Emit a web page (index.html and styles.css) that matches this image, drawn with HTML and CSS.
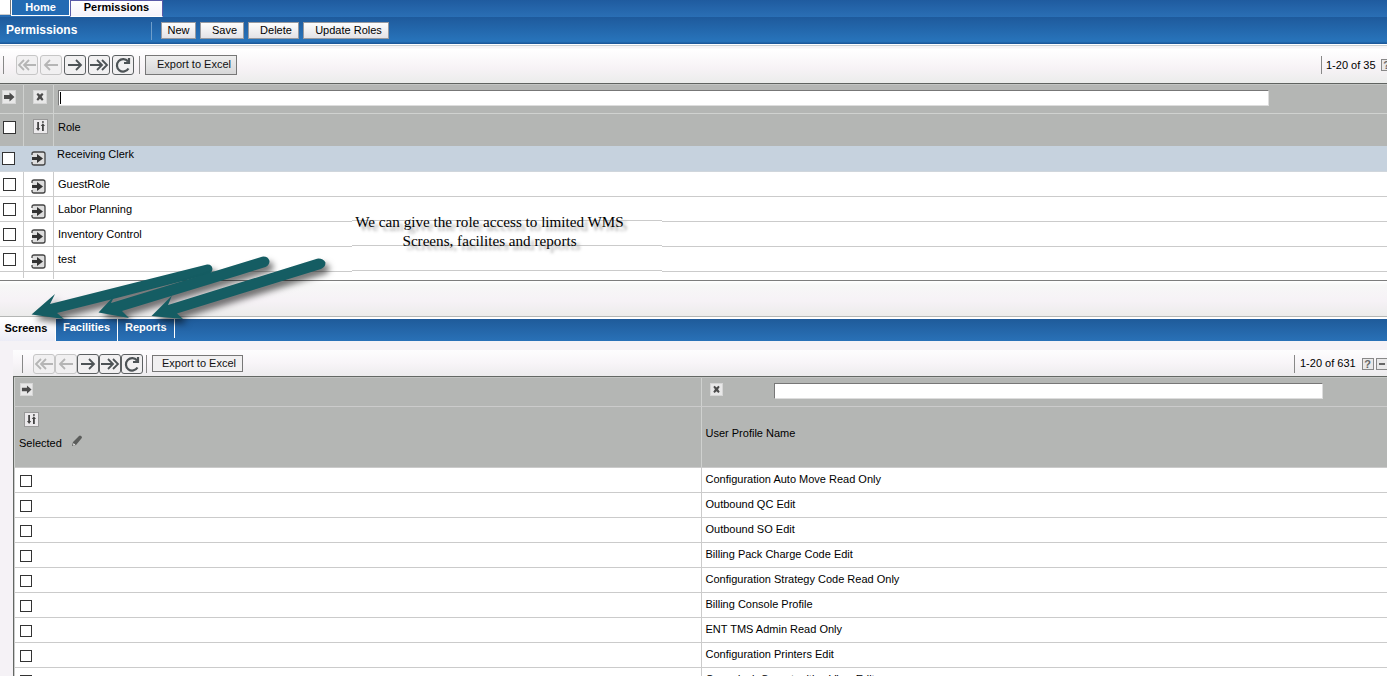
FILE: index.html
```html
<!DOCTYPE html>
<html lang="en">
<head>
<meta charset="utf-8">
<title>Permissions</title>
<link rel="stylesheet" href="styles.css">
</head>
<body>
<svg class="defs" width="0" height="0" aria-hidden="true">
  <symbol id="first" viewBox="0 0 20 18"><path d="M7 4L2 9l5 5M12 4L7 9l5 5M7 9h12"/></symbol>
  <symbol id="prev" viewBox="0 0 20 18"><path d="M9 4L4 9l5 5M4 9h13"/></symbol>
  <symbol id="next" viewBox="0 0 20 18"><path d="M11 4l5 5-5 5M16 9H3"/></symbol>
  <symbol id="last" viewBox="0 0 20 18"><path d="M8 4l5 5-5 5M13 4l5 5-5 5M13 9H1"/></symbol>
  <symbol id="reload" viewBox="0 0 20 18"><path d="M15 5.500A6.200 6.200 0 1 0 15.500 12.500M16 2v5h-5"/></symbol>
  <symbol id="go" viewBox="0 0 12 12"><path d="M1 4h5.500V1.500l5 4.500-5 4.500V8H1z"/></symbol>
  <symbol id="clear" viewBox="0 0 12 12"><path d="M2.500 3.200L4 2l2 1.800L8 2l1.500 1.200L7.700 5.800l1.800 2.600L8 9.700 6 7.800 4 9.700 2.500 8.400l1.800-2.600z"/></symbol>
  <symbol id="sort" viewBox="0 0 13 13"><path d="M3.200 2H5v6h1.200L4.100 11 2 8h1.200zM8 11h1.800V6H11L8.900 3.200 6.800 6H8zM8 1.300h1.800v1.400H8z"/></symbol>
  <symbol id="detail" viewBox="0 0 15 15"><path class="frame" d="M1 4V3q0-2 2-2h9q2 0 2 2v9q0 2-2 2H3q-2 0-2-2v-1"/><path d="M1 6h5V3l6 4.500L6 12V9H1z"/></symbol>
</svg>

<main class="app">
  <nav class="top-tabs">
    <span class="corner"></span>
    <a class="tab-home">Home</a>
    <a class="tab-current">Permissions</a>
  </nav>
  <header class="title-bar">
    <h1>Permissions</h1>
    <button class="act new">New</button>
    <button class="act save">Save</button>
    <button class="act delete">Delete</button>
    <button class="act update">Update Roles</button>
  </header>

  <div class="toolbar roles-bar">
    <i class="sep"></i>
    <div class="pager">
      <svg class="off"><use href="#first"/></svg><svg class="off"><use href="#prev"/></svg><svg><use href="#next"/></svg><svg><use href="#last"/></svg><svg class="reload"><use href="#reload"/></svg>
    </div>
    <i class="sep"></i>
    <button class="export">Export to Excel</button>
    <div class="count"><span>1-20 of 35</span><b class="mini">?</b></div>
  </div>

  <section class="roles">
    <div class="row filter">
      <div class="c1"><svg class="mark"><use href="#go"/></svg></div>
      <div class="c2"><svg class="mark"><use href="#clear"/></svg></div>
      <div class="c3"><div class="field"><i class="caret"></i></div></div>
    </div>
    <div class="row heads">
      <div class="c1"><i class="box"></i></div>
      <div class="c2"><svg class="sort"><use href="#sort"/></svg></div>
      <div class="c3">Role</div>
    </div>
    <div class="row chosen"><div class="c1"><i class="box"></i></div><div class="c2"><svg class="detail"><use href="#detail"/></svg></div><div class="c3">Receiving Clerk</div></div>
    <div class="row"><div class="c1"><i class="box"></i></div><div class="c2"><svg class="detail"><use href="#detail"/></svg></div><div class="c3">GuestRole</div></div>
    <div class="row"><div class="c1"><i class="box"></i></div><div class="c2"><svg class="detail"><use href="#detail"/></svg></div><div class="c3">Labor Planning</div></div>
    <div class="row"><div class="c1"><i class="box"></i></div><div class="c2"><svg class="detail"><use href="#detail"/></svg></div><div class="c3">Inventory Control</div></div>
    <div class="row"><div class="c1"><i class="box"></i></div><div class="c2"><svg class="detail"><use href="#detail"/></svg></div><div class="c3">test</div></div>
    <div class="row stub"><div class="c1"></div><div class="c2"></div><div class="c3"></div></div>
  </section>

  <div class="splitter"></div>

  <nav class="sub-tabs">
    <a class="sub on">Screens</a><a class="sub fac">Facilities</a><a class="sub rep">Reports</a>
  </nav>

  <section class="panel">
    <div class="toolbar screens-bar">
      <i class="sep"></i>
      <div class="pager">
        <svg class="off"><use href="#first"/></svg><svg class="off"><use href="#prev"/></svg><svg><use href="#next"/></svg><svg><use href="#last"/></svg><svg class="reload"><use href="#reload"/></svg>
      </div>
      <i class="sep"></i>
      <button class="export">Export to Excel</button>
      <div class="count"><span>1-20 of 631</span><b class="mini">?</b><b class="mini minus"></b></div>
    </div>
    <div class="screens">
      <div class="line filter">
        <div class="left"><svg class="mark"><use href="#go"/></svg></div>
        <div class="right"><svg class="mark"><use href="#clear"/></svg><div class="field"></div></div>
      </div>
      <div class="line heads">
        <div class="left">
          <svg class="sort"><use href="#sort"/></svg>
          <div class="selected">Selected<svg class="pencil" viewBox="0 0 12 12"><path d="M1 11l1-4 6-6q1-1 2 0l1 1q0 1-1 2L5 10z"/><path class="lead" d="M2.500 8l2 2-2.500.5z"/></svg></div>
        </div>
        <div class="right">User Profile Name</div>
      </div>
      <div class="line"><div class="left"><i class="box"></i></div><div class="right">Configuration Auto Move Read Only</div></div>
      <div class="line"><div class="left"><i class="box"></i></div><div class="right">Outbound QC Edit</div></div>
      <div class="line"><div class="left"><i class="box"></i></div><div class="right">Outbound SO Edit</div></div>
      <div class="line"><div class="left"><i class="box"></i></div><div class="right">Billing Pack Charge Code Edit</div></div>
      <div class="line"><div class="left"><i class="box"></i></div><div class="right">Configuration Strategy Code Read Only</div></div>
      <div class="line"><div class="left"><i class="box"></i></div><div class="right">Billing Console Profile</div></div>
      <div class="line"><div class="left"><i class="box"></i></div><div class="right">ENT TMS Admin Read Only</div></div>
      <div class="line"><div class="left"><i class="box"></i></div><div class="right">Configuration Printers Edit</div></div>
      <div class="line"><div class="left"><i class="box"></i></div><div class="right">Crossdock Opportunities View Edit</div></div>
    </div>
  </section>

  <div class="note"><p>We can give the role access to limited WMS<br>Screens, facilites and reports</p></div>
  <svg class="arrows" viewBox="0 0 340 100">
    <g><path d="M207 14.500Q212 14 212.500 19Q212 23 208 24.500L113 49L57 63L64 69L31.500 64.500L55 44L50 54Z"/></g>
    <g><path d="M262 6.700Q268 6 269.500 11Q269.500 15 265.500 17L240 25L122 61L129 68L98.500 62.500L115 45L111 53Z"/></g>
    <g><path d="M317 8.700Q323 8 325.500 12.500Q325.500 17 321 19L240 44L177 63.500L183 69L151.500 66L172 45.500L168 55Z"/></g>
  </svg>
</main>
</body>
</html>
```
FILE: styles.css
```css
* { box-sizing: border-box; }
body { margin: 0; background: #f5f2f6; font: 11px/13px "Liberation Sans", Arial, sans-serif; color: #000; }
svg { display: block; flex: none; }
i, b { flex: none; }
button { font: inherit; padding: 0; color: #000; white-space: nowrap; flex: none; }
.defs { position: absolute; }
.app { position: relative; width: 1387px; height: 676px; overflow: hidden; }

.top-tabs { display: flex; height: 17px; background: linear-gradient(#1f5b9f, #2a6fb5); font-weight: bold; }
.corner { width: 11px; height: 15px; background: #fff; border-bottom: 1px solid #ccc; border-right: 1px solid #777; }
.tab-home { width: 59px; height: 16px; padding-top: 1px; text-align: center; color: #fff; background: #226bb3; border: 1px solid #fff; border-top: 0; }
.tab-current { width: 93px; height: 17px; text-align: center; background: linear-gradient(#fff, #f4f2fa); border: 1px solid #5a5ba8; border-bottom-color: #fff; }

.title-bar { display: flex; height: 27px; padding: 5px 0 0 6px; background: linear-gradient(#1e5a9c, #2874bb 90%, #1a5394); }
.title-bar h1 { margin: 0; width: 146px; height: 18px; padding-top: 1px; font-size: 12px; line-height: 14px; color: #fff; border-right: 1px solid #6e9ecb; }
.act { height: 17px; margin-right: 4px; padding-bottom: 1px; background: linear-gradient(#fdfdfd, #e3e2e6); border: 1px solid #989aa0; }
.new { width: 35px; margin-left: 9px; }
.save { width: 44px; padding-left: 5px; }
.delete { width: 51px; padding-left: 5px; }
.update { width: 86px; padding-left: 5px; }

.toolbar { display: flex; background: linear-gradient(#fff, #f6f3f7 50%, #ececec); }
.roles-bar { height: 39px; padding: 10px 0 0 3px; border-top: 1px solid #fff; background: linear-gradient(#c9cfd2 0 1px, #f7f5f7 1px 3px, #fff 4px, #f7f3f6 60%, #ebeceb); }
.sep { width: 1px; height: 18px; margin-top: 1px; background: #888; }
.pager { display: flex; gap: 2px; }
.pager svg { width: 22px; height: 20px; border: 1px solid #5c6062; border-radius: 3px; background: #f1f0f1; fill: none; stroke: #4d5356; stroke-width: 1.800; }
.pager .reload { stroke-width: 2.200; }
.pager .off { border-color: #c6c6c6; stroke: #b5b5b5; }
.roles-bar .pager { margin: 0 5px 0 12px; }
.export { height: 20px; border: 1px solid #777; background: linear-gradient(#eee, #d7d7d8); color: #111; }
.roles-bar .export { width: 92px; margin-left: 5px; padding: 0 0 1px 6px; }
.count { display: flex; margin-left: auto; border-left: 1px solid #888; height: 18px; }
.roles-bar .count { width: 66px; padding: 3px 0 0 4px; gap: 5px; margin-top: 1px; }
.count span { white-space: nowrap; flex: none; }
.mini { width: 12px; height: 12px; border: 1px solid #888; background: #e9e8e9; color: #666; text-align: center; line-height: 11px; }

.roles { height: 197px; border-top: 1px solid #5f6360; background: #fff; overflow: hidden; }
.row { display: flex; height: 25px; border-bottom: 1px solid #cbcbcb; }
.c1, .c2 { flex: none; border-right: 1px solid #cbcbcb; }
.c1 { width: 24px; padding: 6px 0 0 3px; }
.c2 { width: 30px; padding: 7px 0 0 7px; }
.c3 { flex: 1; padding: 6px 0 0 4px; }
.filter, .heads { background: #b4b6b4; border-color: #d0d2d0; }
.filter > div, .heads > div { border-color: #cfd1cf; }
.row.filter { height: 30px; border-top: 1px solid #c3c5c3; }
.row.filter .c1 { padding: 5px 0 0 2px; }
.row.filter .c2 { padding: 5px 0 0 9px; }
.mark { width: 13px; height: 13px; border: 1px solid #d6d6d6; background: #e8e8e8; fill: #4c4c4c; }
.row .mark { width: 14px; height: 14px; }
.field { width: 1211px; height: 16px; background: #fff; border: 1px solid #ddd; border-top-color: #777; border-left-color: #777; padding: 1px; }
.caret { display: block; width: 1px; height: 12px; background: #000; }
.row.filter .c3 { padding: 5px 0 0 4px; }
.row.heads { height: 32px; border-bottom: 0; }
.row.heads .c1 { padding-top: 7px; }
.row.heads .c2 { padding: 5px 0 0 9px; }
.row.heads .c3 { padding-top: 7px; }
.box { display: block; width: 13px; height: 13px; border: 1px solid #333; background: #fff; }
.sort { width: 15px; height: 15px; border: 1px solid #999; background: #eceaec; fill: #444; }
.detail { width: 15px; height: 15px; fill: #333; }
.frame { fill: #dedede; stroke: #444; stroke-width: 1.300; }
.row.chosen { height: 26px; background: #c6d2de; border-color: #d0d6dc; }
.chosen > div { border-color: #c6d2de; }
.chosen .c1 { padding-left: 2px; }
.chosen .c2 { padding-top: 5px; }
.chosen .c3 { padding: 2px 0 0 3px; }
.row.stub { height: 6px; border: 0; }

.splitter { height: 39px; border-top: 1px solid #7d7d7d; background: linear-gradient(#fff 0, #f7f7f7 4px, #f6f2f6 20px, #ececeb 35px, #b5b7b5 35px 36px, #fff 36px); }
.sub-tabs { display: flex; height: 22px; background: linear-gradient(#1f5b9a, #2971b7); font-weight: bold; }
.sub { height: 22px; padding-top: 2px; color: #fff; flex: none; }
.sub.on { width: 56px; padding: 3px 0 0 4.500px; color: #000; background: linear-gradient(#fff, #ececf6); border-right: 1px solid #fff; }
.fac { width: 62px; padding-left: 7px; border-right: 1px solid #fff; }
.rep { width: 57px; height: 19px; padding-left: 7px; border-right: 1px solid #fff; }

.panel { padding: 9px 0 0 13px; }
.screens-bar { height: 26px; padding: 4px 0 0 9px; background: linear-gradient(#fdfdfe, #f8f5f8 50%, #edecee); }
.screens-bar .pager { gap: 0; margin: 0 3px 0 10px; }
.screens-bar .export { width: 91px; height: 17px; margin: 1px 0 0 5px; padding-left: 3px; background: #f1f0f1; }
.screens-bar .count { width: 93px; padding: 2px 0 0 5px; gap: 2px; margin-top: 1px; }
.screens-bar .mini { margin-top: 1px; }
.screens-bar .mini:nth-of-type(1) { margin-left: 4px; }
.minus::before { content: ""; display: block; width: 6px; height: 2px; margin: 4px 0 0 2px; background: #666; }
.screens { border: solid #646864; border-width: 1px 0 0 1px; background: #fff; }
.line { display: flex; height: 25px; border-bottom: 1px solid #cbcbcb; }
.left { width: 688px; flex: none; padding: 6px 0 0 6px; border-left: 1px solid #cbcbcb; border-right: 1px solid #cbcbcb; }
.left .box { width: 12px; height: 12px; margin-top: 1px; margin-left: -1px; }
.right { flex: 1; padding: 5px 0 0 3.500px; }
.line.filter { height: 30px; border-top: 1px solid #c3c5c3; }
.line.filter .left { padding: 5px 0 0 5px; }
.line.filter .right { display: flex; padding: 5px 0 0 8px; }
.line.filter .field { width: 549px; margin-left: 51px; }
.line.heads { height: 61px; }
.line.heads .left { padding: 5px 0 0 9px; }
.line.heads .right { padding-top: 20px; }
.selected { display: flex; gap: 9px; margin: 10px 0 0 -5px; }
.pencil { width: 12px; height: 12px; margin-top: -2px; fill: #5b5d5b; }
.lead { fill: #eee; }

.note { position: absolute; left: 352px; top: 198px; width: 310px; height: 78px; background: linear-gradient(#fff 22px, #cbcbcb 22px 23px, #fff 23px 47px, #cbcbcb 47px 48px, #fff 48px 72px, #cbcbcb 72px 73px, #fff 73px); }
.note p { margin: 14px 0 0; width: 275px; text-align: center; font: 15.150px/19px "Liberation Serif", "Times New Roman", serif; white-space: nowrap; text-shadow: 4px 4px 3px #aaa; }
.arrows { position: absolute; left: 0; top: 250px; width: 340px; height: 100px; fill: #155d63; }
.arrows g { filter: drop-shadow(4px 5px 3px rgba(0, 0, 0, .55)); }
```
